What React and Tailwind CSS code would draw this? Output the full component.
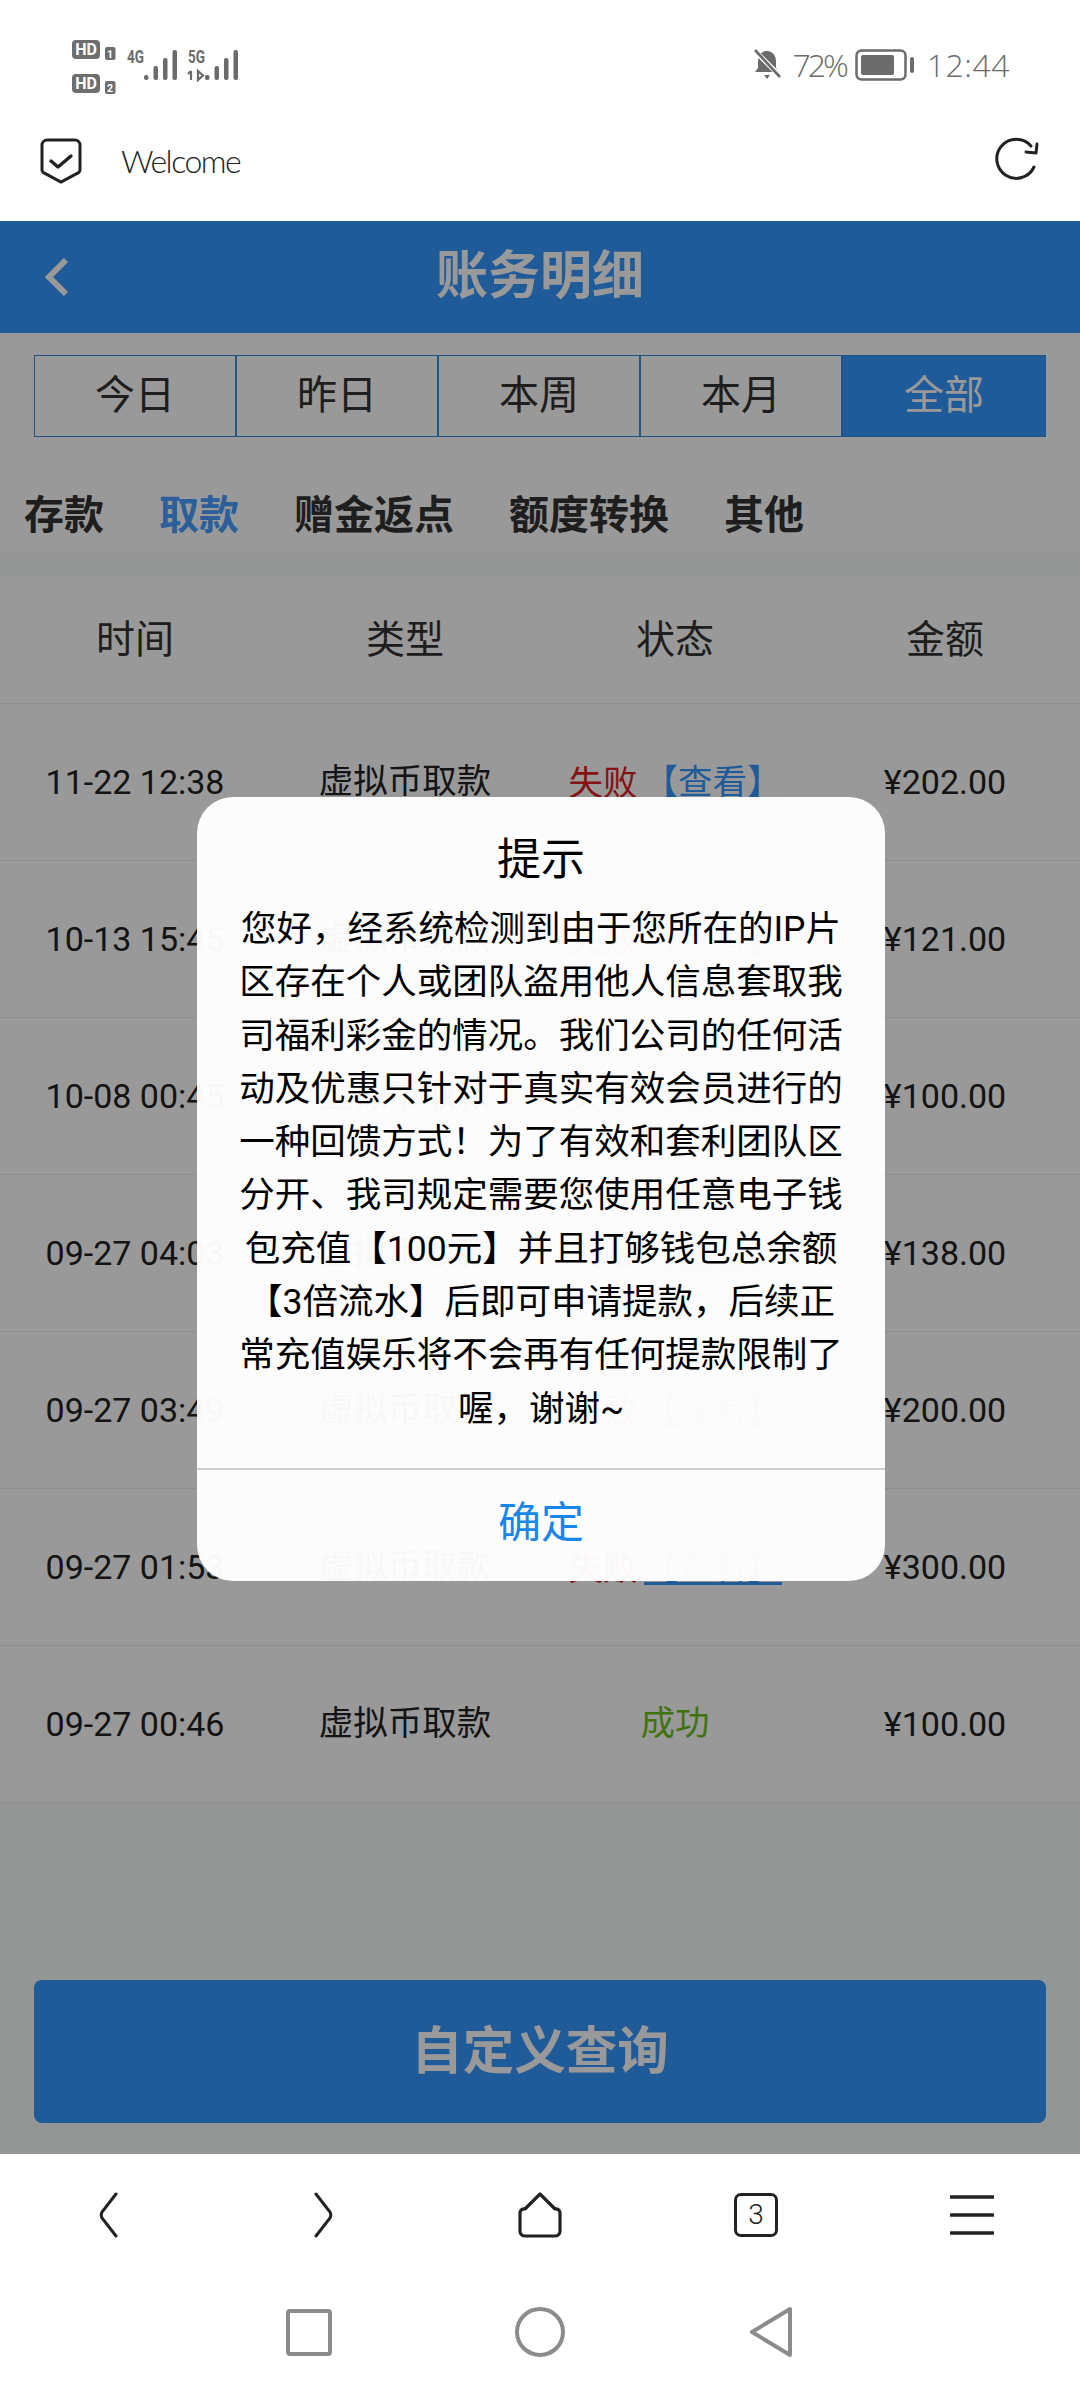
const CJK = "font-['Roboto','Noto_Sans_CJK_SC',sans-serif]";

const ranges = ["今日", "昨日", "本周", "本月", "全部"];
const tabs = ["存款", "取款", "赠金返点", "额度转换", "其他"];
const heads = ["时间", "类型", "状态", "金额"];
const rows = [
  ["11-22 12:38", "¥202.00", "fail"],
  ["10-13 15:45", "¥121.00", "fail"],
  ["10-08 00:45", "¥100.00", "fail"],
  ["09-27 04:03", "¥138.00", "fail"],
  ["09-27 03:49", "¥200.00", "fail"],
  ["09-27 01:53", "¥300.00", "fail"],
  ["09-27 00:46", "¥100.00", "ok"],
];

const message = [
  "您好，经系统检测到由于您所在的IP片",
  "区存在个人或团队盗用他人信息套取我",
  "司福利彩金的情况。我们公司的任何活",
  "动及优惠只针对于真实有效会员进行的",
  "一种回馈方式！为了有效和套利团队区",
  "分开、我司规定需要您使用任意电子钱",
  "包充值【100元】并且打够钱包总余额",
  "【3倍流水】后即可申请提款，后续正",
  "常充值娱乐将不会再有任何提款限制了",
  "喔，谢谢~",
];

function SignalBars({ x }) {
  const tops = [37, 28, 20, 12];
  return tops.map((top, i) => (
    <rect key={i} x={x + i * 9.5} y={top} width="4.5" height={42 - top} rx="2" fill="#6b6b6b" />
  ));
}

function StatusLeft() {
  return (
    <svg width="180" height="60" viewBox="0 0 180 60" className="ml-[70px] mt-[38px]">
      <rect x="2" y="2" width="28" height="19" rx="4" fill="#6e6e6e" />
      <text x="16" y="17" textAnchor="middle" fontSize="16" fontWeight="700" fontFamily="Roboto" fill="#fff">HD</text>
      <rect x="35" y="9" width="10.5" height="13" rx="2" fill="#6e6e6e" />
      <text x="40" y="20" textAnchor="middle" fontSize="10.5" fontWeight="700" fontFamily="Roboto" fill="#fff">1</text>
      <rect x="2" y="36" width="28" height="19" rx="4" fill="#6e6e6e" />
      <text x="16" y="51" textAnchor="middle" fontSize="16" fontWeight="700" fontFamily="Roboto" fill="#fff">HD</text>
      <rect x="35" y="43" width="10.5" height="13" rx="2" fill="#6e6e6e" />
      <text x="40" y="54" textAnchor="middle" fontSize="10.5" fontWeight="700" fontFamily="Roboto" fill="#fff">2</text>
      <text x="57" y="25" fontSize="18" fontWeight="700" fontFamily="Roboto" fill="#6b6b6b" textLength="17" lengthAdjust="spacingAndGlyphs">4G</text>
      <SignalBars x={74} />
      <text x="118" y="25" fontSize="18" fontWeight="700" fontFamily="Roboto" fill="#6b6b6b" textLength="17" lengthAdjust="spacingAndGlyphs">5G</text>
      <path d="M121 33v9M118 36l3-3M128 33v9l5-4.5z" fill="none" stroke="#6b6b6b" strokeWidth="2.2" />
      <SignalBars x={135} />
    </svg>
  );
}

function StatusRight() {
  return (
    <div className="mr-[70px] mt-[49px] flex items-center font-['Open_Sans',sans-serif] font-light text-[#6b6b6b]">
      <svg width="28" height="32" viewBox="0 0 28 32">
        <path d="M14 2c6 0 9 5 9 11v6l3 4H2l3-4v-6c0-6 3-11 9-11z" fill="#6b6b6b" />
        <path d="M11 26h6l-3 4z" fill="#6b6b6b" />
        <path d="M1 1l26 26" stroke="#fff" strokeWidth="5" />
        <path d="M2 1l25 27" stroke="#6b6b6b" strokeWidth="2.6" />
      </svg>
      <span className="ml-[11px] text-[32px] leading-none tracking-[-3px]">72%</span>
      <svg width="60" height="32" viewBox="0 0 60 32" className="ml-[9px]">
        <rect x="1.5" y="1.5" width="49" height="29" rx="5" fill="none" stroke="#6b6b6b" strokeWidth="2.5" />
        <rect x="6" y="6" width="33" height="20" rx="2" fill="#6b6b6b" />
        <rect x="55" y="8" width="4" height="16" rx="2" fill="#6b6b6b" />
      </svg>
      <span className="ml-[12px] text-[32px] leading-none tracking-[0.5px]">12:44</span>
    </div>
  );
}

function BrowserBar() {
  return (
    <div className="flex h-[101px] items-start justify-between pl-[39px] pr-[40px] pt-[17px]">
      <div className="flex items-center">
        <svg width="44" height="48" viewBox="0 0 44 48">
          <path d="M8 3h28a5 5 0 0 1 5 5v25a3 3 0 0 1-1.5 2.6L22 45 4.5 35.6A3 3 0 0 1 3 33V8a5 5 0 0 1 5-5z" fill="none" stroke="#222" strokeWidth="3" />
          <path d="M12 24l7 6 13-11" fill="none" stroke="#222" strokeWidth="3.4" strokeLinecap="round" strokeLinejoin="round" />
        </svg>
        <span className="ml-[38px] font-['Lato',sans-serif] text-[32px] font-light tracking-[-1.5px] text-[#222]">Welcome</span>
      </div>
      <svg width="46" height="46" viewBox="0 0 46 46">
        <path d="M40 30A19.5 19.5 0 1 1 37 9" fill="none" stroke="#222" strokeWidth="3" strokeLinecap="round" />
        <path d="M32 15l10 1 1-9" fill="none" stroke="#222" strokeWidth="3" strokeLinecap="round" strokeLinejoin="round" />
      </svg>
    </div>
  );
}

function Ledger() {
  return (
    <div className="flex h-[1933px] flex-col bg-[#f7faf8]">
      <div className="relative flex h-[112px] shrink-0 items-center justify-center bg-[#3496ff]">
        <svg width="28" height="42" viewBox="0 0 28 42" className="absolute left-[43px] top-[35px]">
          <path d="M23 4L6 21l17 17" fill="none" stroke="#fff" strokeWidth="6" />
        </svg>
        <span className="text-[52px] font-bold text-white">账务明细</span>
      </div>
      <div className="shrink-0 bg-white px-[34px] pt-[22px]">
        <div className="grid h-[82px] grid-cols-5 border-[1.5px] border-[#3d8ce0]">
          {ranges.map((label, i) => (
            <div
              key={label}
              className={
                i === 4
                  ? "flex items-center justify-center bg-[#3496ff] text-[40px] text-white"
                  : "flex items-center justify-center border-r-2 border-[#3d8ce0] text-[40px] text-[#333]"
              }
            >
              {label}
            </div>
          ))}
        </div>
      </div>
      <div className="flex h-[116px] shrink-0 items-center gap-[55px] bg-white pl-[24px] pt-[42px]">
        {tabs.map((label, i) => (
          <span key={label} className={i === 1 ? "text-[40px] font-bold text-[#4a9eff]" : "text-[40px] font-bold text-[#333]"}>
            {label}
          </span>
        ))}
      </div>
      <div className="h-[24px] shrink-0" />
      <div className="shrink-0 bg-white">
        <div className="grid h-[127px] grid-cols-4 items-center border-b border-[#ececec] text-center text-[39px] text-[#333]">
          {heads.map((h) => (
            <span key={h}>{h}</span>
          ))}
        </div>
        {rows.map(([time, amount, state]) => (
          <div key={time} className="grid h-[157px] grid-cols-4 items-center border-b border-[#ececec] text-center text-[34.5px] text-[#222]">
            <span className="text-[34px]">{time}</span>
            <span>虚拟币取款</span>
            {state === "fail" ? (
              <span className="flex items-center justify-center">
                <span className="translate-y-[2px] text-[#e02020]">失败</span>
                <span className="ml-[6px] inline-block h-[36px] border-b-[3px] border-[#3496ff] leading-[37px] text-[#3496ff]">【查看】</span>
              </span>
            ) : (
              <span className="text-[#6cc01c]">成功</span>
            )}
            <span className="text-[34px]">{amount}</span>
          </div>
        ))}
      </div>
      <div className="flex flex-1 flex-col justify-end px-[34px] pb-[31px]">
        <div className="flex h-[143px] items-center justify-center rounded-[8px] bg-[#3496ff] text-[51.5px] font-bold text-white">
          自定义查询
        </div>
      </div>
    </div>
  );
}

function Notice() {
  return (
    <div className="absolute left-[197px] top-[797px] flex h-[784px] w-[688px] flex-col overflow-hidden rounded-[36px] bg-white/[0.97] text-center">
      <div className="pt-[34px] text-[44px] leading-[58px] text-black">提示</div>
      <div className="mt-[14px] flex-1 text-[35.5px] leading-[53.3px] text-black">
        {message.map((line) => (
          <div key={line} className="whitespace-nowrap">{line}</div>
        ))}
      </div>
      <div className="flex h-[113px] items-center justify-center border-t-2 border-[#cfcfcf] pb-[4px] text-[43px] text-[#1a87e8]">确定</div>
    </div>
  );
}

function BottomBars() {
  return (
    <div className="bg-white">
      <div className="grid h-[122px] grid-cols-5 items-center justify-items-center">
        <svg width="24" height="46" viewBox="0 0 24 46"><path d="M20 2L6 20q-1.5 3 0 6l14 18" fill="none" stroke="#222" strokeWidth="3" strokeLinecap="round" /></svg>
        <svg width="24" height="46" viewBox="0 0 24 46"><path d="M4 2l14 18q1.5 3 0 6L4 44" fill="none" stroke="#222" strokeWidth="3" strokeLinecap="round" /></svg>
        <svg width="46" height="46" viewBox="0 0 46 46"><path d="M23 2L8 17a4 4 0 0 0-5 3.5V39a5 5 0 0 0 5 5h30a5 5 0 0 0 5-5V20.5a4 4 0 0 0-5-3.500z" fill="none" stroke="#222" strokeWidth="3.2" strokeLinejoin="round" /></svg>
        <div className="flex h-[44px] w-[44px] items-center justify-center rounded-[7px] border-[3px] border-[#222] font-['Roboto',sans-serif] text-[28px] font-light leading-none text-[#222]">3</div>
        <svg width="44" height="44" viewBox="0 0 44 44"><path d="M1 4h42M1 22h42M1 40h42" stroke="#222" strokeWidth="3.6" strokeLinecap="round" /></svg>
      </div>
      <div className="mx-auto grid h-[112px] w-[693px] grid-cols-3 items-center justify-items-center">
        <svg width="46" height="47" viewBox="0 0 46 47"><rect x="2" y="2" width="42" height="43" rx="2" fill="none" stroke="#8c8c8c" strokeWidth="4" /></svg>
        <svg width="50" height="50" viewBox="0 0 50 50"><circle cx="25" cy="25" r="23" fill="none" stroke="#8c8c8c" strokeWidth="4" /></svg>
        <svg width="44" height="52" viewBox="0 0 44 52"><path d="M41 3v46L3 26z" fill="none" stroke="#8c8c8c" strokeWidth="4" strokeLinejoin="round" /></svg>
      </div>
    </div>
  );
}

export default function App() {
  return (
    <div className={`relative flex h-[2388px] w-[1080px] flex-col overflow-hidden bg-white ${CJK}`}>
      <div className="flex h-[120px] shrink-0 items-start justify-between">
        <StatusLeft />
        <StatusRight />
      </div>
      <div className="shrink-0"><BrowserBar /></div>
      <Ledger />
      <div className="shrink-0"><BottomBars /></div>
      <div className="absolute left-0 top-[221px] h-[1933px] w-full bg-black/40" />
      <Notice />
    </div>
  );
}
